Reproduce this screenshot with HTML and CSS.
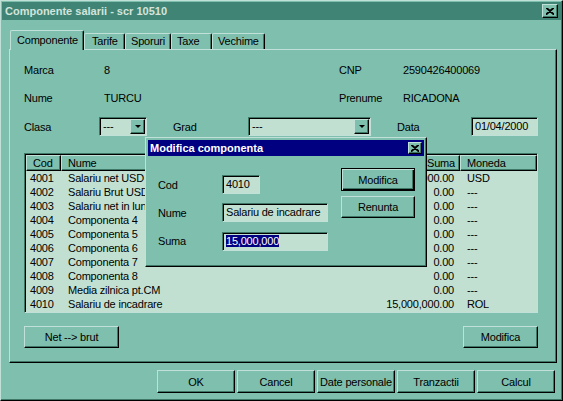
FILE: index.html
```html
<!DOCTYPE html>
<html lang="ro">
<head>
    <meta charset="UTF-8">
    <meta name="viewport" content="width=device-width, initial-scale=1.0">
    <title>Componente salarii - scr 10510</title>
    <link rel="stylesheet" href="styles.css">
</head>
<body>
<div class="window">
    <div class="titlebar">
        <span class="title">Componente salarii - scr 10510</span>
        <span class="close-btn">
            <svg width="8" height="7" viewBox="0 0 8 7"><path d="M0 0L8 7M8 0L0 7M1 0L8 6M7 0L0 6" stroke="#000" stroke-width="1.3" fill="none"/></svg>
        </span>
    </div>

    <div class="tabs">
        <div class="tab active">Componente</div>
        <div class="tab tab-tarife">Tarife</div>
        <div class="tab tab-sporuri">Sporuri</div>
        <div class="tab tab-taxe">Taxe</div>
        <div class="tab tab-vechime">Vechime</div>
    </div>

    <div class="panel">
        <div class="row row-1">
            <span class="col-a">Marca</span>
            <span class="col-b">8</span>
            <span class="col-c">CNP</span>
            <span>2590426400069</span>
        </div>
        <div class="row row-2">
            <span class="col-a">Nume</span>
            <span class="col-b">TURCU</span>
            <span class="col-c">Prenume</span>
            <span>RICADONA</span>
        </div>
        <div class="row row-3">
            <span class="lbl-clasa">Clasa</span>
            <div class="combo combo-clasa"><span class="combo-text">---</span><span class="drop"><i></i></span></div>
            <span class="lbl-grad">Grad</span>
            <div class="combo combo-grad"><span class="combo-text">---</span><span class="drop"><i></i></span></div>
            <span class="lbl-data">Data</span>
            <div class="field field-date">01/04/2000</div>
        </div>

        <div class="list">
            <div class="list-head">
                <span class="h-cod">Cod</span>
                <span class="h-nume">Nume</span>
                <span class="h-suma">Suma</span>
                <span class="h-moneda">Moneda</span>
            </div>
            <div class="list-row"><span class="d-cod">4001</span><span class="d-nume">Salariu net USD</span><span class="d-suma">1,000.00</span><span class="d-moneda">USD</span></div>
            <div class="list-row"><span class="d-cod">4002</span><span class="d-nume">Salariu Brut USD</span><span class="d-suma">0.00</span><span class="d-moneda">---</span></div>
            <div class="list-row"><span class="d-cod">4003</span><span class="d-nume">Salariu net in luna</span><span class="d-suma">0.00</span><span class="d-moneda">---</span></div>
            <div class="list-row"><span class="d-cod">4004</span><span class="d-nume">Componenta 4</span><span class="d-suma">0.00</span><span class="d-moneda">---</span></div>
            <div class="list-row"><span class="d-cod">4005</span><span class="d-nume">Componenta 5</span><span class="d-suma">0.00</span><span class="d-moneda">---</span></div>
            <div class="list-row"><span class="d-cod">4006</span><span class="d-nume">Componenta 6</span><span class="d-suma">0.00</span><span class="d-moneda">---</span></div>
            <div class="list-row"><span class="d-cod">4007</span><span class="d-nume">Componenta 7</span><span class="d-suma">0.00</span><span class="d-moneda">---</span></div>
            <div class="list-row"><span class="d-cod">4008</span><span class="d-nume">Componenta 8</span><span class="d-suma">0.00</span><span class="d-moneda">---</span></div>
            <div class="list-row"><span class="d-cod">4009</span><span class="d-nume">Media zilnica pt.CM</span><span class="d-suma">0.00</span><span class="d-moneda">---</span></div>
            <div class="list-row"><span class="d-cod">4010</span><span class="d-nume">Salariu de incadrare</span><span class="d-suma">15,000,000.00</span><span class="d-moneda">ROL</span></div>
        </div>

        <div class="panel-buttons">
            <button class="btn btn-net">Net --&gt; brut</button>
            <button class="btn btn-modifica">Modifica</button>
        </div>
    </div>

    <div class="actions">
        <button class="btn btn-action">OK</button>
        <button class="btn btn-action">Cancel</button>
        <button class="btn btn-action">Date personale</button>
        <button class="btn btn-action">Tranzactii</button>
        <button class="btn btn-action">Calcul</button>
    </div>

    <div class="modal">
        <div class="modal-title">
            <span>Modifica componenta</span>
            <span class="modal-close">
                <svg width="8" height="7" viewBox="0 0 8 7"><path d="M0 0L8 7M8 0L0 7M1 0L8 6M7 0L0 6" stroke="#000" stroke-width="1.3" fill="none"/></svg>
            </span>
        </div>
        <div class="modal-body">
            <div class="modal-form">
                <span class="m-label">Cod</span>
                <div class="field field-cod">4010</div>
                <span class="m-label">Nume</span>
                <div class="field field-wide">Salariu de incadrare</div>
                <span class="m-label m-last">Suma</span>
                <div class="field field-wide m-last"><span class="selected">15,000,000</span></div>
            </div>
            <div class="modal-buttons">
                <button class="btn btn-default">Modifica</button>
                <button class="btn btn-renunta">Renunta</button>
            </div>
        </div>
    </div>
</div>
</body>
</html>
```

FILE: styles.css
```css
body {
    margin: 0;
    background-color: #7fbfae;
    font-family: "Liberation Sans", Arial, sans-serif;
    font-size: 11px;
    letter-spacing: -0.2px;
    color: #000;
}
.window {
    position: relative;
    width: 563px;
    height: 401px;
    box-sizing: border-box;
    border: 1px solid;
    border-color: #c0e0d8 #000 #000 #c0e0d8;
    box-shadow: inset -1px -1px #407868;
    padding: 1px;
    overflow: hidden;
}
.titlebar {
    height: 18px;
    background-color: #3f8474;
    display: flex;
    align-items: center;
    justify-content: space-between;
    padding: 0 3px 0 3px;
}
.title {
    color: #d4e4dc;
    font-weight: bold;
    font-size: 11px;
    letter-spacing: 0;
}
.close-btn, .modal-close {
    width: 14px;
    height: 12px;
    box-sizing: border-box;
    background-color: #7fbfae;
    border: 1px solid;
    border-color: #c0e0d8 #000 #000 #c0e0d8;
    box-shadow: inset -1px -1px #407868;
    display: flex;
    align-items: center;
    justify-content: center;
}
.close-btn {
    width: 16px;
    height: 14px;
}

/* tabs */
.tabs {
    display: flex;
    align-items: flex-end;
    height: 19px;
    margin-top: 10px;
    padding-left: 8px;
}
.tab {
    height: 16px;
    box-sizing: border-box;
    line-height: 15px;
    padding-left: 5px;
    border-top: 1px solid #c0e0d8;
    border-left: 1px solid #c0e0d8;
    border-right: 1px solid #000;
    box-shadow: inset -1px 0 #407868;
    border-radius: 2px 2px 0 0;
}
.tab.active {
    position: relative;
    z-index: 1;
    height: 20px;
    margin-bottom: -1px;
    width: 74px;
    padding-left: 6px;
    line-height: 19px;
    background-color: #7fbfae;
}
.tab-tarife { width: 41px; padding-left: 7px; }
.tab-sporuri { width: 46px; }
.tab-taxe { width: 41px; }
.tab-vechime { width: 53px; }

/* panel */
.panel {
    width: 548px;
    height: 314px;
    margin-left: 7px;
    box-sizing: border-box;
    border: 1px solid;
    border-color: #c0e0d8 #000 #000 #c0e0d8;
    box-shadow: inset -1px -1px #407868;
    padding: 10px 18px 0 14px;
}
.row {
    display: flex;
    align-items: center;
    height: 19px;
}
.row-2 { margin-top: 9px; }
.row-3 { margin-top: 10px; }
.col-a { width: 80px; }
.col-b { width: 235px; }
.col-c { width: 64px; }
.lbl-clasa { width: 75px; }
.lbl-grad { width: 75px; margin-left: 26px; }
.lbl-data { width: 74px; margin-left: 26px; }

.field, .combo {
    height: 19px;
    box-sizing: border-box;
    background-color: #c2e0d2;
    border: 1px solid;
    border-color: #407868 #c0e0d8 #c0e0d8 #407868;
    box-shadow: inset 1px 1px #000;
    padding-left: 3px;
    line-height: 17px;
    white-space: nowrap;
    overflow: hidden;
}
.combo {
    display: flex;
    justify-content: space-between;
    padding: 1px 1px 1px 3px;
    line-height: 15px;
}
.combo-clasa { width: 48px; }
.combo-grad { width: 123px; }
.drop {
    width: 15px;
    height: 15px;
    box-sizing: border-box;
    background-color: #7fbfae;
    border: 1px solid;
    border-color: #c0e0d8 #000 #000 #c0e0d8;
    box-shadow: inset -1px -1px #407868;
    display: flex;
    align-items: center;
    justify-content: center;
}
.drop i {
    width: 0;
    height: 0;
    border-left: 3px solid transparent;
    border-right: 3px solid transparent;
    border-top: 3px solid #000;
}
.field-date { width: 67px; }

/* list */
.list {
    margin-top: 17px;
    height: 160px;
    box-sizing: border-box;
    background-color: #c2e0d2;
    border: 1px solid;
    border-color: #407868 #c0e0d8 #c0e0d8 #407868;
    box-shadow: inset 1px 1px #000;
    padding: 1px 0 0 1px;
}
.list-head, .list-row {
    display: grid;
    grid-template-columns: 35px 300px 99px 1fr;
}
.list-head span {
    height: 16px;
    line-height: 15px;
    box-sizing: border-box;
    background-color: #7fbfae;
    border: 1px solid;
    border-color: #c0e0d8 #000 #000 #c0e0d8;
    box-shadow: inset -1px -1px #407868;
    padding-left: 6px;
}
.list-head .h-suma {
    text-align: right;
    padding-right: 4px;
}
.list-row {
    height: 14px;
    line-height: 14px;
    white-space: nowrap;
}
.d-cod { padding-left: 4px; }
.d-nume { padding-left: 7px; overflow: hidden; }
.d-suma { text-align: right; padding-right: 6px; }
.d-moneda { padding-left: 7px; }

.panel-buttons {
    display: flex;
    justify-content: space-between;
    margin-top: 13px;
}

/* buttons */
.btn {
    font-family: "Liberation Sans", Arial, sans-serif;
    font-size: 11px;
    letter-spacing: -0.2px;
    color: #000;
    background-color: #7fbfae;
    box-sizing: border-box;
    border: 1px solid;
    border-color: #c0e0d8 #000 #000 #c0e0d8;
    box-shadow: inset -1px -1px #407868;
    padding: 0;
    margin: 0;
}
.btn-net { width: 95px; height: 22px; }
.btn-modifica { width: 75px; height: 22px; }

.actions {
    display: flex;
    gap: 2px;
    margin-top: 7px;
    padding-left: 155px;
}
.btn-action { width: 78px; height: 23px; }

/* modal dialog */
.modal {
    position: absolute;
    left: 144px;
    top: 136px;
    width: 282px;
    height: 130px;
    box-sizing: border-box;
    background-color: #7fbfae;
    border: 1px solid;
    border-color: #c0e0d8 #000 #000 #c0e0d8;
    box-shadow: inset -1px -1px #407868;
    padding: 2px;
}
.modal-title {
    height: 16px;
    background-color: #000080;
    color: #fff;
    font-weight: bold;
    letter-spacing: 0;
    display: flex;
    align-items: center;
    justify-content: space-between;
    padding: 0 2px 0 2px;
}
.modal-body {
    display: flex;
}
.modal-form {
    display: grid;
    grid-template-columns: 64px auto;
    grid-template-rows: 19px 19px 19px;
    row-gap: 9px;
    align-items: center;
    margin-top: 19px;
    padding-left: 10px;
}
.m-last { margin-top: 1px; }
.field-cod { width: 38px; }
.field-wide { width: 106px; }
.selected {
    background-color: #000080;
    color: #fff;
}
.modal-buttons {
    display: flex;
    flex-direction: column;
    margin-top: 12px;
    margin-left: 13px;
}
.btn-default {
    width: 74px;
    height: 23px;
    border: 1px solid #000;
    box-shadow: inset 1px 1px #c0e0d8, inset -1px -1px #000, inset -2px -2px #407868;
}
.btn-renunta {
    width: 74px;
    height: 22px;
    margin-top: 5px;
}
```
